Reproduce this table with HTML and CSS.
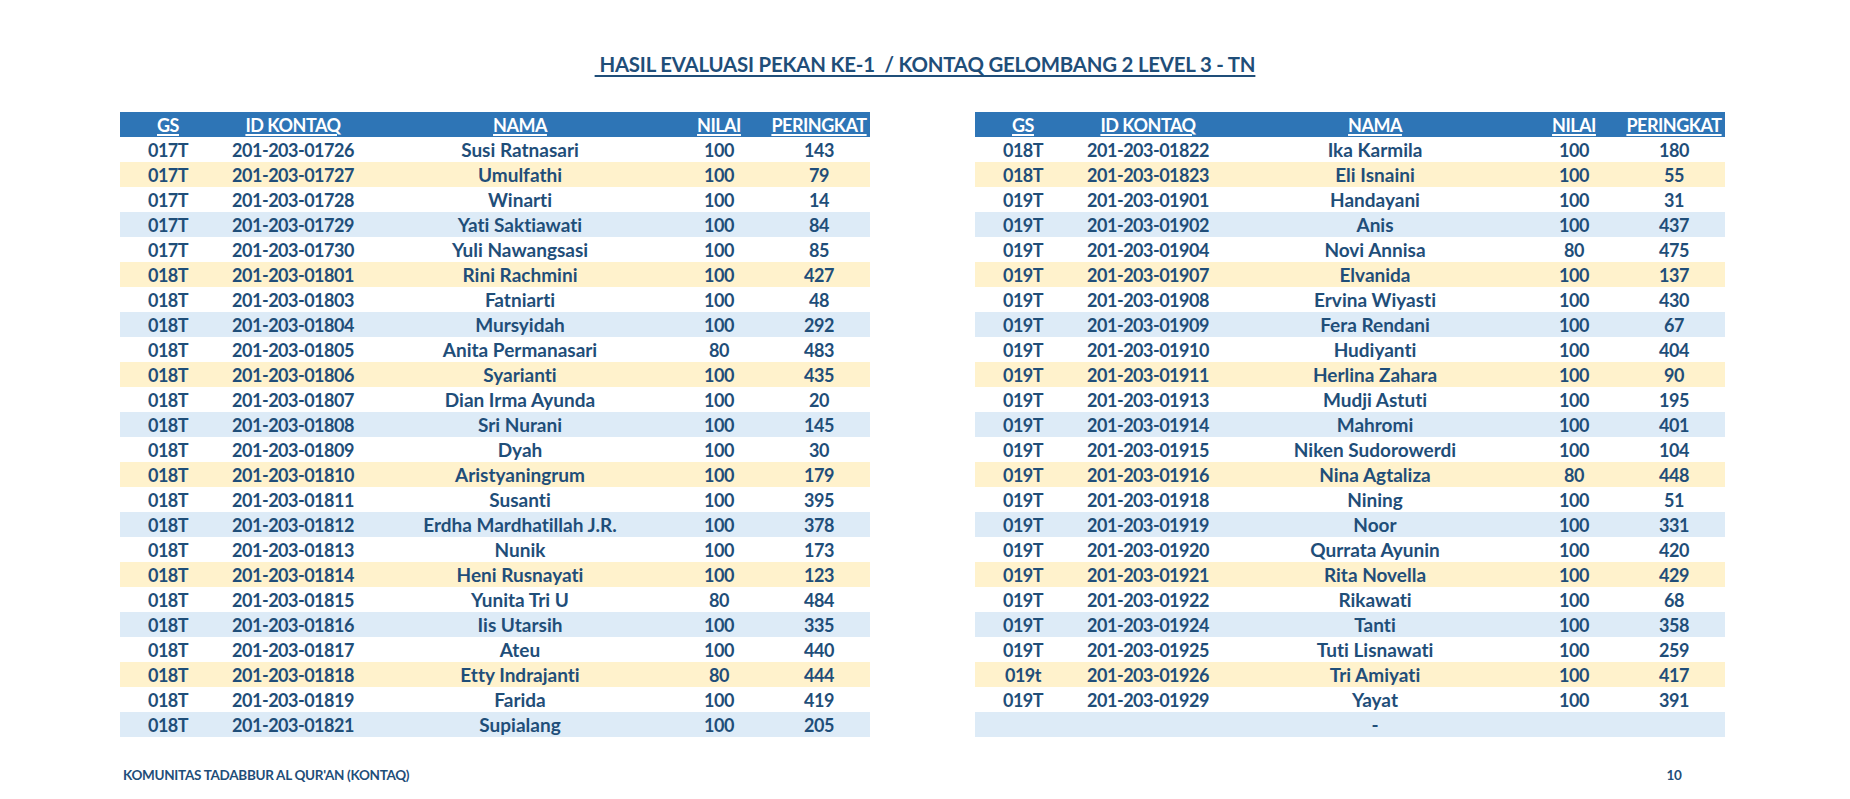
FILE: index.html
```html
<!DOCTYPE html>
<html>
<head>
<meta charset="utf-8">
<title>Hasil Evaluasi Pekan Ke-1</title>
<link rel="stylesheet" href="styles.css">
</head>
<body>
<div class="page">
  <h1 class="title"><span> HASIL EVALUASI PEKAN KE-1  / KONTAQ GELOMBANG 2 LEVEL 3 - TN</span></h1>
  <div class="tables">
    <table class="grid">
      <colgroup><col class="c-gs"><col class="c-id"><col class="c-nama"><col class="c-nilai"><col class="c-rank"></colgroup>
      <thead><tr><th><span>GS</span></th><th><span>ID KONTAQ</span></th><th><span>NAMA</span></th><th><span>NILAI</span></th><th><span>PERINGKAT</span></th></tr></thead>
      <tbody>
        <tr><td>017T</td><td>201-203-01726</td><td class="nm">Susi Ratnasari</td><td>100</td><td>143</td></tr>
        <tr class="y"><td>017T</td><td>201-203-01727</td><td class="nm">Umulfathi</td><td>100</td><td>79</td></tr>
        <tr><td>017T</td><td>201-203-01728</td><td class="nm">Winarti</td><td>100</td><td>14</td></tr>
        <tr class="b"><td>017T</td><td>201-203-01729</td><td class="nm">Yati Saktiawati</td><td>100</td><td>84</td></tr>
        <tr><td>017T</td><td>201-203-01730</td><td class="nm">Yuli Nawangsasi</td><td>100</td><td>85</td></tr>
        <tr class="y"><td>018T</td><td>201-203-01801</td><td class="nm">Rini Rachmini</td><td>100</td><td>427</td></tr>
        <tr><td>018T</td><td>201-203-01803</td><td class="nm">Fatniarti</td><td>100</td><td>48</td></tr>
        <tr class="b"><td>018T</td><td>201-203-01804</td><td class="nm">Mursyidah</td><td>100</td><td>292</td></tr>
        <tr><td>018T</td><td>201-203-01805</td><td class="nm">Anita Permanasari</td><td>80</td><td>483</td></tr>
        <tr class="y"><td>018T</td><td>201-203-01806</td><td class="nm">Syarianti</td><td>100</td><td>435</td></tr>
        <tr><td>018T</td><td>201-203-01807</td><td class="nm">Dian Irma Ayunda</td><td>100</td><td>20</td></tr>
        <tr class="b"><td>018T</td><td>201-203-01808</td><td class="nm">Sri Nurani</td><td>100</td><td>145</td></tr>
        <tr><td>018T</td><td>201-203-01809</td><td class="nm">Dyah</td><td>100</td><td>30</td></tr>
        <tr class="y"><td>018T</td><td>201-203-01810</td><td class="nm">Aristyaningrum</td><td>100</td><td>179</td></tr>
        <tr><td>018T</td><td>201-203-01811</td><td class="nm">Susanti</td><td>100</td><td>395</td></tr>
        <tr class="b"><td>018T</td><td>201-203-01812</td><td class="nm">Erdha Mardhatillah J.R.</td><td>100</td><td>378</td></tr>
        <tr><td>018T</td><td>201-203-01813</td><td class="nm">Nunik</td><td>100</td><td>173</td></tr>
        <tr class="y"><td>018T</td><td>201-203-01814</td><td class="nm">Heni Rusnayati</td><td>100</td><td>123</td></tr>
        <tr><td>018T</td><td>201-203-01815</td><td class="nm">Yunita Tri U</td><td>80</td><td>484</td></tr>
        <tr class="b"><td>018T</td><td>201-203-01816</td><td class="nm">Iis Utarsih</td><td>100</td><td>335</td></tr>
        <tr><td>018T</td><td>201-203-01817</td><td class="nm">Ateu</td><td>100</td><td>440</td></tr>
        <tr class="y"><td>018T</td><td>201-203-01818</td><td class="nm">Etty Indrajanti</td><td>80</td><td>444</td></tr>
        <tr><td>018T</td><td>201-203-01819</td><td class="nm">Farida</td><td>100</td><td>419</td></tr>
        <tr class="b"><td>018T</td><td>201-203-01821</td><td class="nm">Supialang</td><td>100</td><td>205</td></tr>
      </tbody>
    </table>
    <table class="grid">
      <colgroup><col class="c-gs"><col class="c-id"><col class="c-nama"><col class="c-nilai"><col class="c-rank"></colgroup>
      <thead><tr><th><span>GS</span></th><th><span>ID KONTAQ</span></th><th><span>NAMA</span></th><th><span>NILAI</span></th><th><span>PERINGKAT</span></th></tr></thead>
      <tbody>
        <tr><td>018T</td><td>201-203-01822</td><td class="nm">Ika Karmila</td><td>100</td><td>180</td></tr>
        <tr class="y"><td>018T</td><td>201-203-01823</td><td class="nm">Eli Isnaini</td><td>100</td><td>55</td></tr>
        <tr><td>019T</td><td>201-203-01901</td><td class="nm">Handayani</td><td>100</td><td>31</td></tr>
        <tr class="b"><td>019T</td><td>201-203-01902</td><td class="nm">Anis</td><td>100</td><td>437</td></tr>
        <tr><td>019T</td><td>201-203-01904</td><td class="nm">Novi Annisa</td><td>80</td><td>475</td></tr>
        <tr class="y"><td>019T</td><td>201-203-01907</td><td class="nm">Elvanida</td><td>100</td><td>137</td></tr>
        <tr><td>019T</td><td>201-203-01908</td><td class="nm">Ervina Wiyasti</td><td>100</td><td>430</td></tr>
        <tr class="b"><td>019T</td><td>201-203-01909</td><td class="nm">Fera Rendani</td><td>100</td><td>67</td></tr>
        <tr><td>019T</td><td>201-203-01910</td><td class="nm">Hudiyanti</td><td>100</td><td>404</td></tr>
        <tr class="y"><td>019T</td><td>201-203-01911</td><td class="nm">Herlina Zahara</td><td>100</td><td>90</td></tr>
        <tr><td>019T</td><td>201-203-01913</td><td class="nm">Mudji Astuti</td><td>100</td><td>195</td></tr>
        <tr class="b"><td>019T</td><td>201-203-01914</td><td class="nm">Mahromi</td><td>100</td><td>401</td></tr>
        <tr><td>019T</td><td>201-203-01915</td><td class="nm">Niken Sudorowerdi</td><td>100</td><td>104</td></tr>
        <tr class="y"><td>019T</td><td>201-203-01916</td><td class="nm">Nina Agtaliza</td><td>80</td><td>448</td></tr>
        <tr><td>019T</td><td>201-203-01918</td><td class="nm">Nining</td><td>100</td><td>51</td></tr>
        <tr class="b"><td>019T</td><td>201-203-01919</td><td class="nm">Noor</td><td>100</td><td>331</td></tr>
        <tr><td>019T</td><td>201-203-01920</td><td class="nm">Qurrata Ayunin</td><td>100</td><td>420</td></tr>
        <tr class="y"><td>019T</td><td>201-203-01921</td><td class="nm">Rita Novella</td><td>100</td><td>429</td></tr>
        <tr><td>019T</td><td>201-203-01922</td><td class="nm">Rikawati</td><td>100</td><td>68</td></tr>
        <tr class="b"><td>019T</td><td>201-203-01924</td><td class="nm">Tanti</td><td>100</td><td>358</td></tr>
        <tr><td>019T</td><td>201-203-01925</td><td class="nm">Tuti Lisnawati</td><td>100</td><td>259</td></tr>
        <tr class="y"><td>019t</td><td>201-203-01926</td><td class="nm">Tri Amiyati</td><td>100</td><td>417</td></tr>
        <tr><td>019T</td><td>201-203-01929</td><td class="nm">Yayat</td><td>100</td><td>391</td></tr>
        <tr class="b"><td></td><td></td><td class="nm">-</td><td></td><td></td></tr>
      </tbody>
    </table>
  </div>
  <div class="footer">
    <span class="org">KOMUNITAS TADABBUR AL QUR'AN (KONTAQ)</span>
    <span class="pageno">10</span>
  </div>
</div>
</body>
</html>
```
FILE: styles.css
```css
html, body {
  margin: 0;
  padding: 0;
  background: #ffffff;
}
body {
  font-family: Lato, "Liberation Sans", sans-serif;
  font-weight: 700;
  color: #1f4e79;
  font-variant-ligatures: none;
  font-feature-settings: "liga" 0, "clig" 0;
}
.page {
  width: 1850px;
  height: 799px;
  overflow: hidden;
}
.title {
  margin: 52px 0 0;
  text-align: center;
  font-size: 20.4px;
  line-height: 24px;
  font-weight: 700;
  white-space: pre;
  letter-spacing: -0.2px;
  color: #1f4e79;
}
.title span {
  text-decoration: underline;
  text-decoration-thickness: 2px;
  text-underline-offset: 3px;
}
.tables {
  display: flex;
  gap: 105px;
  padding-left: 120px;
  margin-top: 36px;
}
.grid {
  width: 750px;
  border-collapse: collapse;
  table-layout: fixed;
}
.c-gs { width: 96px; }
.c-id { width: 154px; }
.c-nama { width: 300px; }
.c-nilai { width: 98px; }
.c-rank { width: 102px; }
.grid tr {
  height: 25px;
}
.grid th,
.grid td {
  padding: 2px 0 0;
  height: 23px;
  line-height: 23px;
  text-align: center;
  vertical-align: top;
  font-size: 18px;
  letter-spacing: -0.5px;
  white-space: nowrap;
  font-weight: 700;
  overflow: hidden;
}
.grid td.nm {
  padding-top: 0;
  height: 25px;
  line-height: 25px;
  font-size: 19px;
  letter-spacing: 0;
}
.grid th {
  background: #2e75b6;
  color: #ffffff;
}
.grid th span {
  text-decoration: underline;
  text-decoration-thickness: 1.5px;
  text-underline-offset: 2px;
}
.grid tr.y td { background: #fff2cc; }
.grid tr.b td { background: #ddebf7; }
.footer {
  display: flex;
  justify-content: space-between;
  align-items: baseline;
  width: 1605px;
  box-sizing: border-box;
  margin: 30px 0 0 120px;
  padding-left: 3px;
  font-size: 13.5px;
  line-height: 16px;
  letter-spacing: -0.3px;
}
.pageno {
  width: 102px;
  text-align: center;
}
```
